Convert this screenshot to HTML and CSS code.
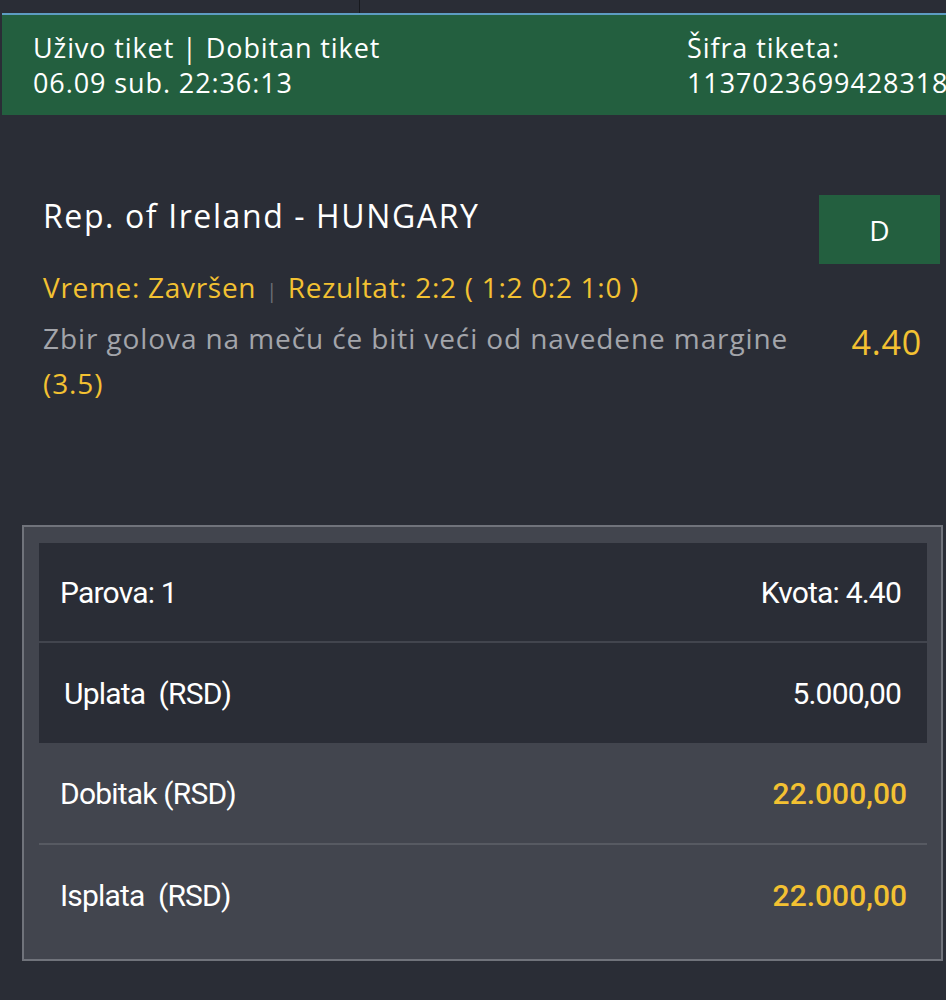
FILE: index.html
```html
<!DOCTYPE html>
<html>

<head>
  <title>Tiket</title>
  <link rel="stylesheet" href="styles.css">
</head>

<body>
  <nav class="tabs">
    <div class="tab"></div>
    <div class="tab"></div>
  </nav>
  <header class="ticket-head">
    <div class="head-left">
      <div>Uživo tiket | Dobitan tiket</div>
      <div>06.09 sub. 22:36:13</div>
    </div>
    <div class="head-right">
      <div>Šifra tiketa:</div>
      <div>11370236994283189</div>
    </div>
  </header>

  <section class="event">
    <div class="event-top">
      <div class="match">Rep. of Ireland - HUNGARY</div>
      <div class="status">D</div>
    </div>
    <div class="meta">Vreme: Završen <span class="sep">|</span> Rezultat: 2:2 ( 1:2 0:2 1:0 )</div>
    <div class="selection">
      <div class="desc">Zbir golova na meču će biti veći od navedene margine <span class="margin">(3.5)</span></div>
      <div class="odd">4.40</div>
    </div>
  </section>

  <section class="summary">
    <div class="summary-dark">
      <div class="row">
        <span>Parova: 1</span>
        <span>Kvota: 4.40</span>
      </div>
      <div class="row row-indent">
        <span>Uplata&nbsp; (RSD)</span>
        <span>5.000,00</span>
      </div>
    </div>
    <div class="row row-light">
      <span>Dobitak&nbsp;(RSD)</span>
      <span class="win">22.000,00</span>
    </div>
    <div class="row row-light">
      <span>Isplata&nbsp; (RSD)</span>
      <span class="win">22.000,00</span>
    </div>
  </section>
</body>

</html>
```

FILE: styles.css
```css
* {
    margin: 0;
    padding: 0;
    box-sizing: border-box;
}
:root {
    --bg-color: #2a2d36;
    --panel-color: #42454e;
    --green: #235f3f;
    --yellow: #f3c132;
    --text-color: #ffffff;
    --muted: #a3a5ab;
}
body {
    font-family: "Open Sans", Roboto, sans-serif;
    background-color: var(--bg-color);
    color: var(--text-color);
    overflow: hidden;
}

.tabs {
    display: flex;
    height: 13px;
}
.tabs .tab:first-child {
    width: 360px;
    border-right: 1px solid #17191e;
}

.ticket-head {
    display: flex;
    margin-left: 2px;
    height: 102px;
    border-top: 2px solid #5d9cc2;
    background-color: var(--green);
    padding: 15px 0 0 31px;
    font-size: 27px;
    line-height: 35px;
    letter-spacing: 0.9px;
    white-space: nowrap;
    overflow: hidden;
}
.head-left {
    width: 654px;
    flex-shrink: 0;
}

.event {
    padding: 80px 6px 0 43px;
}
.event-top {
    display: flex;
    justify-content: space-between;
    align-items: flex-start;
}
.match {
    margin-top: 2px;
    font-size: 32px;
    line-height: 38px;
    letter-spacing: 1.6px;
}
.status {
    width: 121px;
    height: 69px;
    background-color: var(--green);
    font-size: 28px;
    display: flex;
    align-items: center;
    justify-content: center;
}
.meta {
    margin-top: 5px;
    font-size: 28px;
    line-height: 36px;
    letter-spacing: 0.7px;
    color: var(--yellow);
}
.meta .sep {
    color: #6d7078;
    font-size: 20px;
    margin: 0 2px;
}
.selection {
    display: flex;
    align-items: flex-start;
    margin-top: 7px;
    padding-right: 18px;
}
.desc {
    width: 780px;
    font-size: 28px;
    line-height: 45px;
    letter-spacing: 0.9px;
    color: var(--muted);
}
.desc .margin {
    color: var(--yellow);
}
.odd {
    margin-left: auto;
    margin-top: 6px;
    font-size: 34px;
    line-height: 40px;
    letter-spacing: 0.8px;
    color: var(--yellow);
}

.summary {
    margin: 119px 3px 0 22px;
    border: 2px solid #70737b;
    background-color: var(--panel-color);
    padding: 16px 14px 14px 15px;
}
.summary-dark {
    background-color: var(--bg-color);
}
.row {
    display: flex;
    justify-content: space-between;
    align-items: center;
    height: 100px;
    padding: 0 26px 0 21px;
    font-family: Roboto, "Liberation Sans", sans-serif;
    font-size: 30px;
    letter-spacing: -0.8px;
}
.summary-dark .row:first-child {
    border-bottom: 2px solid var(--panel-color);
}
.row-indent {
    padding-left: 25px;
}
.row-light + .row-light {
    height: 102px;
    border-top: 2px solid #575a62;
}
.win {
    color: var(--yellow);
    font-weight: 500;
    letter-spacing: 0;
    margin-right: -6px;
}
```
